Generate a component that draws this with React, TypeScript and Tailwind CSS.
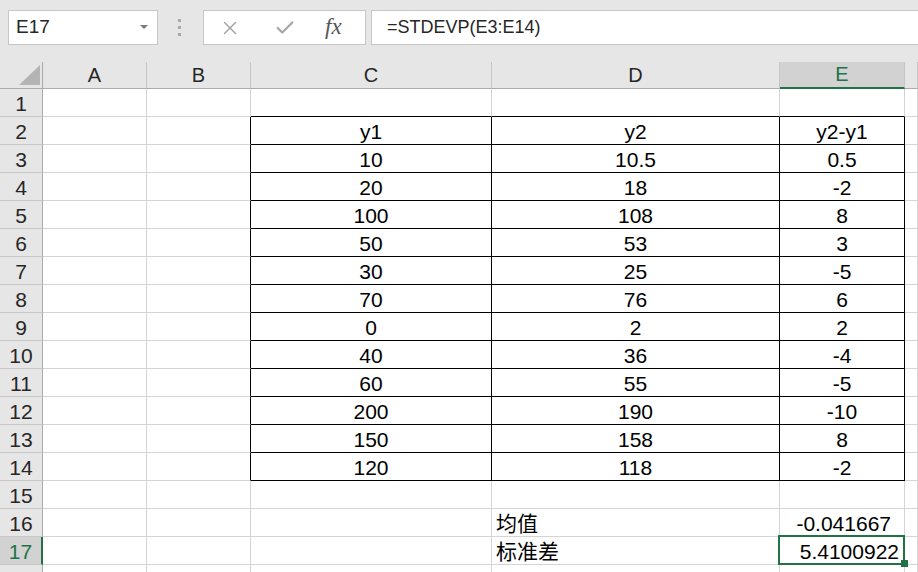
import { Check, X } from 'lucide-react';

const font = { fontFamily: '"Liberation Sans", "Noto Sans CJK SC", Arial, sans-serif' };

type Cell = { text: string; align?: 'center' | 'right' | 'left' };

// row number -> column index (0=A .. 4=E) -> cell
const data: Record<number, Record<number, Cell>> = {
    16: { 3: { text: '均值', align: 'left' }, 4: { text: '-0.041667', align: 'right' } },
    17: { 3: { text: '标准差', align: 'left' }, 4: { text: '5.4100922', align: 'right' } },
};

const table: [string, string, string][] = [
    ['y1', 'y2', 'y2-y1'],
    ['10', '10.5', '0.5'],
    ['20', '18', '-2'],
    ['100', '108', '8'],
    ['50', '53', '3'],
    ['30', '25', '-5'],
    ['70', '76', '6'],
    ['0', '2', '2'],
    ['40', '36', '-4'],
    ['60', '55', '-5'],
    ['200', '190', '-10'],
    ['150', '158', '8'],
    ['120', '118', '-2'],
];

table.forEach((r, i) => {
    const row = i + 2;
    data[row] = {
        2: { text: r[0], align: 'center' },
        3: { text: r[1], align: 'center' },
        4: { text: r[2], align: 'center' },
    };
});

const cols = ['A', 'B', 'C', 'D', 'E', 'F'];
const rows = Array.from({ length: 18 }, (_, i) => i + 1);

const inTable = (row: number, col: number) => row >= 2 && row <= 14 && col >= 2 && col <= 4;

function GridCell({ row, col }: { row: number; col: number }) {
    const cell = data[row]?.[col];
    const blackRight = inTable(row, col) || inTable(row, col + 1);
    const blackBottom = inTable(row, col) || inTable(row + 1, col);
    const active = row === 17 && col === 4;
    const align =
        cell?.align === 'center'
            ? 'justify-center'
            : cell?.align === 'right'
              ? row === 16
                  ? 'justify-end pr-[13px]'
                  : 'justify-end pr-[5px]'
              : 'justify-start pl-[4px]';
    return (
        <div
            className={`relative flex h-[28px] items-end border-r border-b text-[21px] leading-[24px] text-black ${align} ${
                blackRight ? 'border-r-black' : 'border-r-[#d4d4d4]'
            } ${blackBottom ? 'border-b-black' : 'border-b-[#d4d4d4]'}`}
        >
            {cell && <span className="whitespace-nowrap">{cell.text}</span>}
            {active && (
                <>
                    <div className="absolute -top-[2px] -left-[2px] -right-[1px] -bottom-[1px] border-2 border-[#217346]" />
                    <div className="absolute -right-[4px] -bottom-[3px] z-10 h-[7px] w-[7px] bg-[#217346]" />
                </>
            )}
        </div>
    );
}

export default function App() {
    return (
        <div className="h-[572px] w-[918px] overflow-hidden bg-white" style={font}>
            {/* Formula bar */}
            <div className="flex h-[62px] items-start bg-[#e6e6e6] pt-[10px]">
                <div className="ml-[8px] flex h-[35px] w-[150px] items-center justify-between border border-[#c6c6c6] bg-white pr-[9px] pl-[7px]">
                    <span className="text-[19px] text-[#262626]">E17</span>
                    <svg width="8" height="5" viewBox="0 0 8 5">
                        <path d="M0 0 L8 0 L4 4 Z" fill="#7a7a7a" />
                    </svg>
                </div>
                <div className="ml-[20px] flex h-[35px] flex-col items-center justify-center gap-[4px]">
                    <div className="h-[3px] w-[3px] bg-[#a8a8a8]" />
                    <div className="h-[3px] w-[3px] bg-[#a8a8a8]" />
                    <div className="h-[3px] w-[3px] bg-[#a8a8a8]" />
                </div>
                <div className="ml-[22px] flex h-[35px] w-[163px] items-center border border-[#c6c6c6] bg-white">
                    <X className="ml-[15px] h-[22px] w-[22px] text-[#a6a6a6]" strokeWidth={1.6} />
                    <Check className="ml-[33px] h-[22px] w-[22px] text-[#a6a6a6]" strokeWidth={2.4} />
                    <span
                        className="ml-[29px] text-[23px] text-[#555] italic"
                        style={{ fontFamily: '"Liberation Serif", "Times New Roman", serif' }}
                    >
                        fx
                    </span>
                </div>
                <div className="ml-[5px] flex h-[35px] flex-1 items-center border border-r-0 border-[#c6c6c6] bg-white pl-[15px]">
                    <span className="text-[18px] text-[#262626]">=STDEVP(E3:E14)</span>
                </div>
            </div>

            {/* Sheet grid */}
            <div className="grid grid-cols-[43px_104px_104px_241px_288px_125px_1fr]">
                {/* Column header row */}
                <div className="relative h-[27px] border-r border-b border-r-[#ababab] border-b-[#ababab] bg-[#e6e6e6]">
                    <svg className="absolute right-[2px] bottom-[3px]" width="21" height="20" viewBox="0 0 21 20">
                        <path d="M21 0 L21 20 L0 20 Z" fill="#b4b4b4" />
                    </svg>
                </div>
                {cols.map((c, i) =>
                    i === 4 ? (
                        <div
                            key={c}
                            className="flex h-[27px] items-center justify-center border-r border-b-2 border-r-[#c6c6c6] border-b-[#217346] bg-[#d2d2d2] pb-[1px] text-[20px] text-[#217346]"
                        >
                            {c}
                        </div>
                    ) : (
                        <div
                            key={c}
                            className="flex h-[27px] items-center justify-center border-r border-b border-r-[#c6c6c6] border-b-[#ababab] bg-[#e6e6e6] pb-[1px] text-[20px] text-[#262626]"
                        >
                            {c === 'F' ? '' : c}
                        </div>
                    ),
                )}

                {rows.map((r) => (
                    <div key={r} className="contents">
                        {r === 17 ? (
                            <div className="flex h-[28px] items-end justify-center border-r-2 border-b border-r-[#217346] border-b-[#c6c6c6] bg-[#d2d2d2] text-[21px] leading-[24px] text-[#217346]">
                                {r}
                            </div>
                        ) : (
                            <div className="flex h-[28px] items-end justify-center border-r border-b border-r-[#ababab] border-b-[#c6c6c6] bg-[#e6e6e6] text-[21px] leading-[24px] text-[#262626]">
                                {r === 18 ? '' : r}
                            </div>
                        )}
                        {cols.map((c, ci) => (
                            <GridCell key={c} row={r} col={ci} />
                        ))}
                    </div>
                ))}
            </div>
        </div>
    );
}
